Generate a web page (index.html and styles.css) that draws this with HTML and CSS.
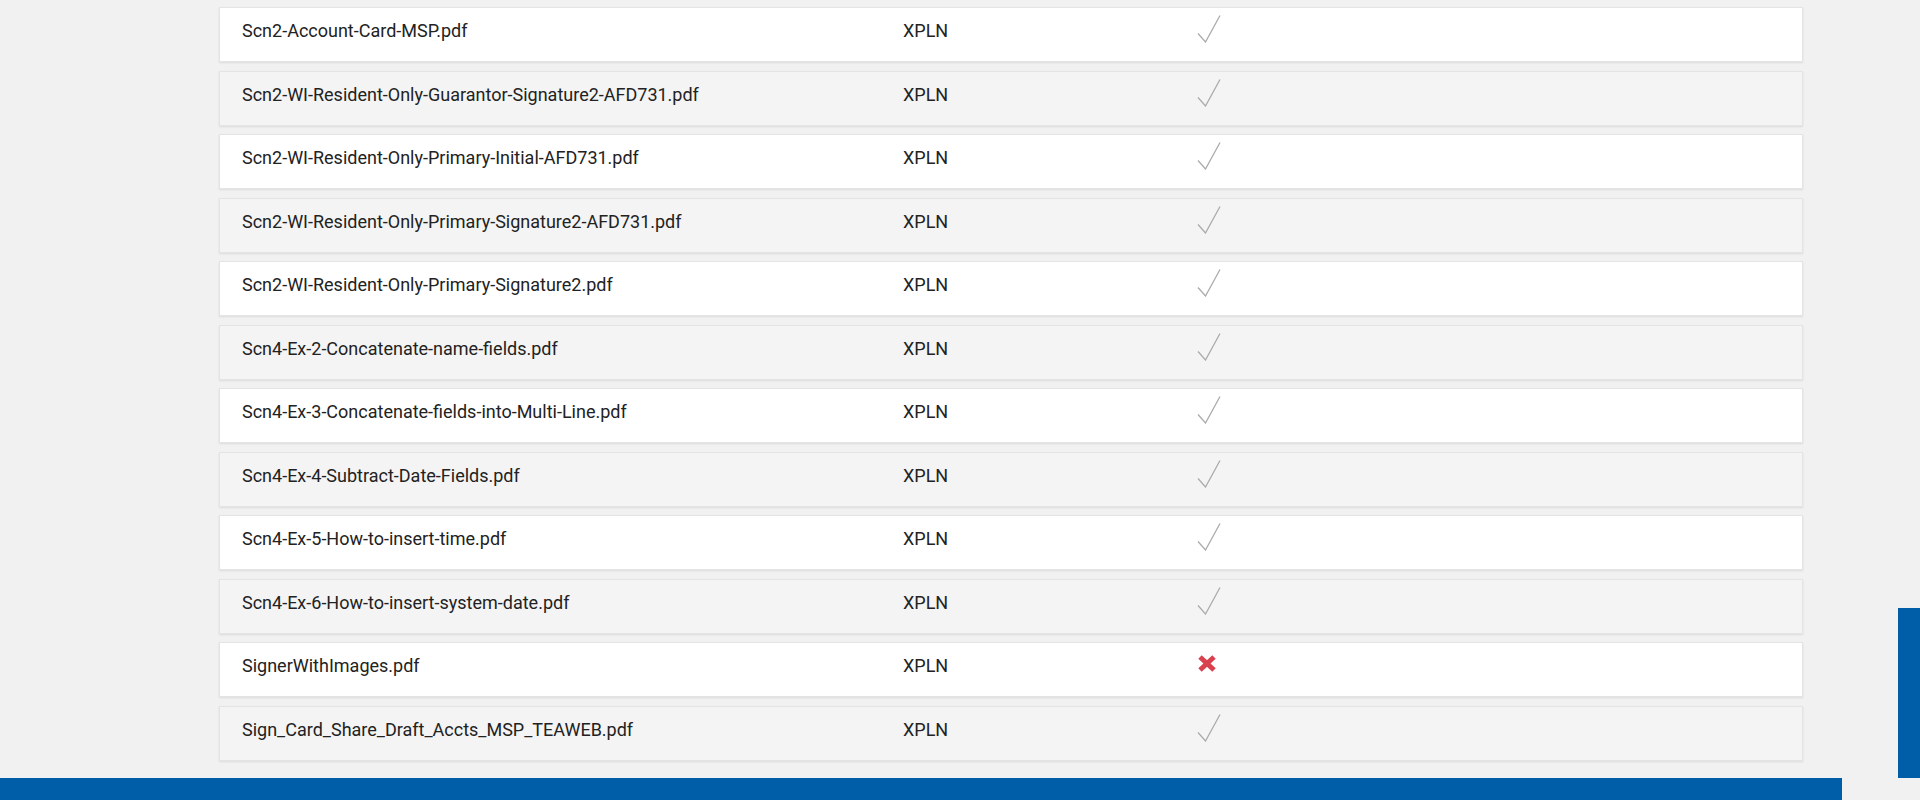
FILE: index.html
```html
<!DOCTYPE html>
<html lang="en">
  <head>
    <meta charset="UTF-8" />
    <meta name="viewport" content="width=device-width, initial-scale=1.0" />
    <title>Documents</title>
    <link rel="stylesheet" href="styles.css">
  </head>
  <body>
    <!-- document list -->
    <div class="list">
      <div class="row">
        <div class="name">Scn2-Account-Card-MSP.pdf</div>
        <div class="type">XPLN</div>
        <div class="status"><svg class="ok" viewBox="0 0 24 28"><polyline points="1,18.5 8.5,27 23,0.5" /></svg></div>
      </div>
      <div class="row">
        <div class="name">Scn2-WI-Resident-Only-Guarantor-Signature2-AFD731.pdf</div>
        <div class="type">XPLN</div>
        <div class="status"><svg class="ok" viewBox="0 0 24 28"><polyline points="1,18.5 8.5,27 23,0.5" /></svg></div>
      </div>
      <div class="row">
        <div class="name">Scn2-WI-Resident-Only-Primary-Initial-AFD731.pdf</div>
        <div class="type">XPLN</div>
        <div class="status"><svg class="ok" viewBox="0 0 24 28"><polyline points="1,18.5 8.5,27 23,0.5" /></svg></div>
      </div>
      <div class="row">
        <div class="name">Scn2-WI-Resident-Only-Primary-Signature2-AFD731.pdf</div>
        <div class="type">XPLN</div>
        <div class="status"><svg class="ok" viewBox="0 0 24 28"><polyline points="1,18.5 8.5,27 23,0.5" /></svg></div>
      </div>
      <div class="row">
        <div class="name">Scn2-WI-Resident-Only-Primary-Signature2.pdf</div>
        <div class="type">XPLN</div>
        <div class="status"><svg class="ok" viewBox="0 0 24 28"><polyline points="1,18.5 8.5,27 23,0.5" /></svg></div>
      </div>
      <div class="row">
        <div class="name">Scn4-Ex-2-Concatenate-name-fields.pdf</div>
        <div class="type">XPLN</div>
        <div class="status"><svg class="ok" viewBox="0 0 24 28"><polyline points="1,18.5 8.5,27 23,0.5" /></svg></div>
      </div>
      <div class="row">
        <div class="name">Scn4-Ex-3-Concatenate-fields-into-Multi-Line.pdf</div>
        <div class="type">XPLN</div>
        <div class="status"><svg class="ok" viewBox="0 0 24 28"><polyline points="1,18.5 8.5,27 23,0.5" /></svg></div>
      </div>
      <div class="row">
        <div class="name">Scn4-Ex-4-Subtract-Date-Fields.pdf</div>
        <div class="type">XPLN</div>
        <div class="status"><svg class="ok" viewBox="0 0 24 28"><polyline points="1,18.5 8.5,27 23,0.5" /></svg></div>
      </div>
      <div class="row">
        <div class="name">Scn4-Ex-5-How-to-insert-time.pdf</div>
        <div class="type">XPLN</div>
        <div class="status"><svg class="ok" viewBox="0 0 24 28"><polyline points="1,18.5 8.5,27 23,0.5" /></svg></div>
      </div>
      <div class="row">
        <div class="name">Scn4-Ex-6-How-to-insert-system-date.pdf</div>
        <div class="type">XPLN</div>
        <div class="status"><svg class="ok" viewBox="0 0 24 28"><polyline points="1,18.5 8.5,27 23,0.5" /></svg></div>
      </div>
      <div class="row">
        <div class="name">SignerWithImages.pdf</div>
        <div class="type">XPLN</div>
        <div class="status"><svg class="fail" viewBox="0 0 20 19"><line x1="3" y1="3" x2="17" y2="16" /><line x1="17" y1="3" x2="3" y2="16" /></svg></div>
      </div>
      <div class="row">
        <div class="name">Sign_Card_Share_Draft_Accts_MSP_TEAWEB.pdf</div>
        <div class="type">XPLN</div>
        <div class="status"><svg class="ok" viewBox="0 0 24 28"><polyline points="1,18.5 8.5,27 23,0.5" /></svg></div>
      </div>
    </div>

    <div class="footer"></div>
    <div class="side-tab"></div>
  </body>
</html>
```

FILE: styles.css
```css
* {
  margin: 0;
  padding: 0;
  box-sizing: border-box;
}

body {
  background-color: #f1f1f1;
  font-family: Roboto, "Liberation Sans", sans-serif;
  font-size: 18px;
  color: #222;
  height: 800px;
  overflow: hidden;
}

/* list of documents */
.list {
  padding-top: 7.3px;
  padding-bottom: 9px;
}

.row {
  display: grid;
  grid-template-columns: 661px 294px 1fr;
  align-items: start;
  width: 1584px;
  height: 55px;
  margin-left: 219px;
  margin-bottom: 8.5px;
  padding: 13px 22px 0;
  line-height: 20px;
  background-color: #fff;
  border: 1px solid #e4e4e4;
  box-shadow: 0 1px 2px rgba(0, 0, 0, 0.09);
}

.row:nth-child(even) {
  background-color: #f4f4f4;
}

.status {
  height: 20px;
}

/* icons */
.ok {
  display: block;
  width: 24px;
  height: 28px;
  margin-top: -6px;
  fill: none;
  stroke: #ababab;
  stroke-width: 1.3;
}

.fail {
  display: block;
  width: 20px;
  height: 19px;
  margin-top: -2px;
  stroke: #d9414f;
  stroke-width: 5;
}

/* footer bar */
.footer {
  width: 1842px;
  height: 22px;
  background-color: #005ea8;
}

.side-tab {
  position: absolute;
  top: 608px;
  right: 0;
  width: 22px;
  height: 170px;
  background-color: #005ea8;
}
```
